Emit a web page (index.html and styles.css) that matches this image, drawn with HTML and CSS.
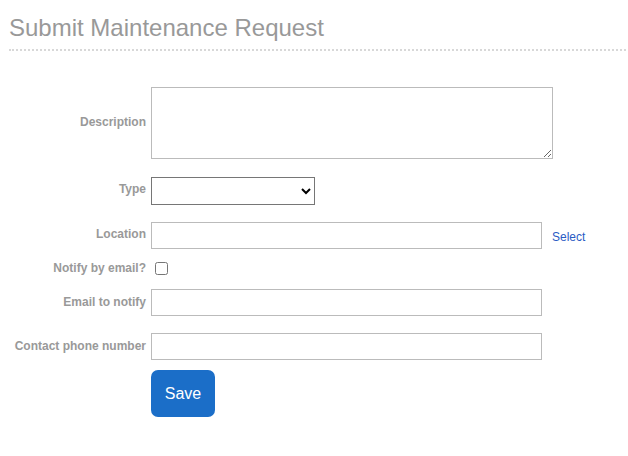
FILE: index.html
```html
<!DOCTYPE html>
<html>
<head>
<meta charset="utf-8">
<link rel="stylesheet" href="styles.css">
</head>
<body>
<div class="page">
  <h1 class="title">Submit Maintenance Request</h1>
  <form class="form">
    <div class="row row-desc">
      <label class="label">Description</label>
      <textarea class="textarea"></textarea>
    </div>
    <div class="row row-type">
      <label class="label label-up">Type</label>
      <select class="select"><option></option></select>
    </div>
    <div class="row row-loc">
      <label class="label label-up">Location</label>
      <input class="input" type="text">
      <a class="link" href="#">Select</a>
    </div>
    <div class="row row-check">
      <label class="label">Notify by email?</label>
      <input class="check" type="checkbox">
    </div>
    <div class="row row-email">
      <label class="label">Email to notify</label>
      <input class="input" type="text">
    </div>
    <div class="row row-phone">
      <label class="label">Contact phone number</label>
      <input class="input" type="text">
    </div>
    <div class="row row-btn">
      <span class="label"></span>
      <button class="btn" type="button">Save</button>
    </div>
  </form>
</div>
</body>
</html>
```
FILE: styles.css
```css
html, body {
  margin: 0;
  padding: 0;
  background: #fff;
}
.page {
  padding: 0 2px 0 9px;
  font-family: "Liberation Sans", Arial, sans-serif;
}
.title {
  margin: 0;
  padding-top: 14px;
  padding-bottom: 7px;
  font-size: 24px;
  line-height: 28px;
  font-weight: normal;
  color: #999;
  border-bottom: 2px dotted #d8d8d8;
}
.form {
  display: flex;
  flex-direction: column;
  padding-top: 36px;
}
.row {
  display: flex;
  align-items: center;
}
.label {
  width: 137px;
  flex: none;
  text-align: right;
  margin-right: 5px;
  font-size: 12px;
  font-weight: bold;
  color: #999;
  margin-top: -2px;
}
.label-up { margin-top: -4px; }
.row-type { margin-top: 18px; }
.row-loc { margin-top: 17px; }
.row-check { margin-top: 10px; }
.row-email { margin-top: 11px; }
.row-phone { margin-top: 17px; }
.row-btn { margin-top: 10px; }
.textarea {
  box-sizing: border-box;
  width: 402px;
  height: 72px;
  margin: 0;
  border: 1px solid #bbb;
  padding: 2px;
}
.select {
  box-sizing: border-box;
  width: 164px;
  height: 28px;
  margin: 0;
  border: 1px solid #767676;
  border-radius: 0;
  background: #fff;
}
.input {
  box-sizing: border-box;
  width: 391px;
  height: 27px;
  margin: 0;
  border: 1px solid #bbb;
  padding: 2px 6px;
}
.link {
  margin-left: 10px;
  font-size: 12px;
  color: #2a5bc4;
  text-decoration: none;
  margin-top: 2px;
}
.check {
  width: 13px;
  height: 13px;
  margin: 3px 3px 3px 4px;
}
.btn {
  width: 64px;
  height: 47px;
  border: none;
  border-radius: 7px;
  background: #1b6ec8;
  color: #fff;
  font-family: "Liberation Sans", Arial, sans-serif;
  font-size: 16px;
  padding: 0;
}
```
